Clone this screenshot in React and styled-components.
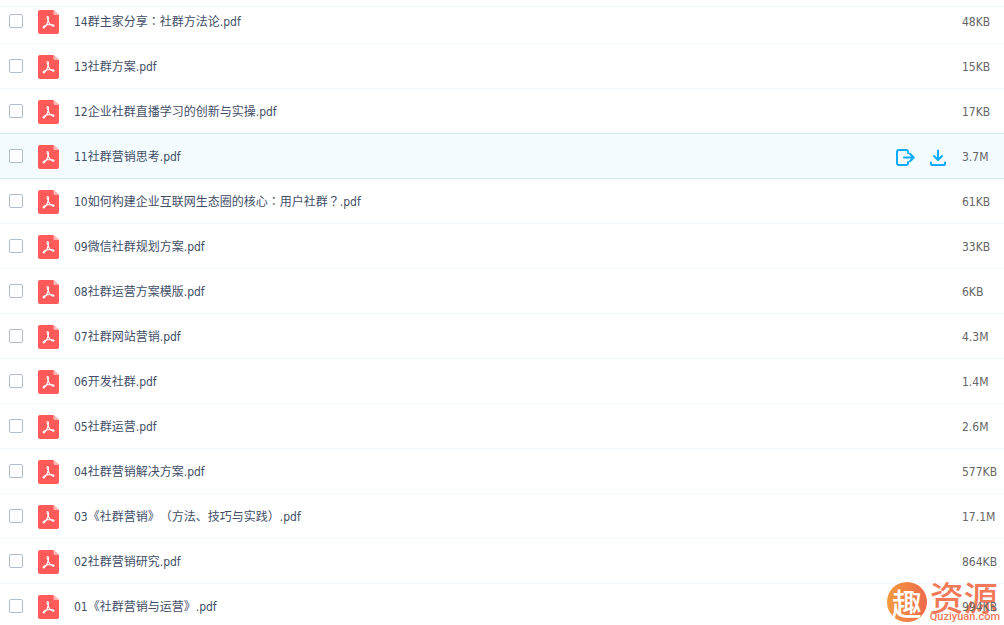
import React from "react";
import styled, { createGlobalStyle } from "styled-components";

const GlobalStyle = createGlobalStyle`
  * { box-sizing: border-box; }
  body {
    margin: 0;
    background: #fff;
    color: #424e67;
    font: 12px/18px "DejaVu Sans Condensed", "Noto Sans CJK SC", sans-serif;
    text-spacing-trim: space-all;
  }
`;

const Page = styled.main`
  position: relative;
  height: 100vh;
  overflow: hidden;
`;

const HeaderEdge = styled.div`
  position: relative;
  z-index: 1;
  height: 7px;
  background: #fff;
  border-bottom: 1px solid #f2f6fd;
`;

const FileList = styled.ul`
  list-style: none;
  margin: -8px 0 0;
  padding: 0;
`;

const Row = styled.li`
  display: flex;
  align-items: center;
  height: ${(p) => (p.$active ? 46 : 45)}px;
  margin-top: ${(p) => (p.$active ? -1 : 0)}px;
  padding: ${(p) => (p.$active ? 1 : 2)}px 0 0 9px;
  background: ${(p) => (p.$active ? "#f3fbff" : "transparent")};
  border-bottom: 1px solid ${(p) => (p.$active ? "#cfe9fb" : "#f2f6fd")};
  border-top: ${(p) => (p.$active ? "1px solid #cfe9fb" : "0")};
`;

const Check = styled.input`
  appearance: none;
  flex: none;
  width: 14px;
  height: 14px;
  margin: 0 15px 2px 0;
  border: 1px solid #aebdcd;
  border-radius: 2px;
  background: #fff;
`;

const FileLabel = styled.label`
  display: flex;
  align-items: center;
  gap: 15px;
  flex: 1;
  min-width: 0;
  white-space: nowrap;
`;

const Centered = styled.span`
  font-family: "Noto Sans CJK TC", sans-serif;
  line-height: 12px;
`;

const Actions = styled.div`
  display: flex;
  gap: 15px;
  margin-right: 16px;
  padding-top: 3px;
`;

const IconButton = styled.button`
  display: flex;
  padding: 0;
  border: 0;
  background: none;
  color: #09aaff;
`;

const Size = styled.span`
  position: relative;
  z-index: 1;
  flex: none;
  width: 42px;
  color: #666;
`;

const Watermark = styled.div`
  position: absolute;
  right: 4px;
  bottom: 3px;
  display: flex;
  align-items: center;
  gap: 3px;
  color: #f2795a;
`;

const Seal = styled.span`
  display: grid;
  place-items: center;
  width: 40px;
  height: 40px;
  border-radius: 50%;
  background: linear-gradient(90deg, #f49a3e, #ee6a4c);
  color: #fff;
  font: 500 30px/36px "Noto Sans CJK SC", sans-serif;
`;

const Brand = styled.span`
  display: flex;
  flex-direction: column;
  font: 500 34px/30px "Noto Sans CJK SC", sans-serif;
`;

const Domain = styled.small`
  font: 500 11px/10px Roboto, sans-serif;
`;

const PdfIcon = () => (
  <svg width="21" height="24" viewBox="0 0 21 24" aria-hidden="true">
    <path d="M2 0H15.500L21 5V22a2 2 0 0 1-2 2H2a2 2 0 0 1-2-2V2a2 2 0 0 1 2-2Z" fill="#ff5a5a" />
    <path d="M15.500 0L21 5H17a1.500 1.500 0 0 1-1.500-1.500Z" fill="#ffb5b5" />
    <path
      d="M9.300 6.500c1.500-.3 1.400 2.200 1 4-.7 2.700-2.500 5.800-3.900 7.100-.9.800-1.700.2-1.100-.7 1.100-1.500 4.700-2.500 7.800-2.400 1.900 0 3.300.8 2.800 1.500-.9.900-4-1.300-5-3.500-.8-1.800-2.600-5.600-1.600-6Z"
      fill="none" stroke="#fff" strokeWidth="1.100"
    />
  </svg>
);

const ShareIcon = () => (
  <svg width="19" height="18" viewBox="0 0 19 18" fill="none" stroke="currentColor" strokeWidth="2" strokeLinecap="round" strokeLinejoin="round" aria-hidden="true">
    <path d="M12 4V3a2 2 0 0 0-2-2H3a2 2 0 0 0-2 2v11a2 2 0 0 0 2 2h7a2 2 0 0 0 2-2v-1M8 8.500h9.500M14 4.800l3.700 3.700-3.700 3.700" />
  </svg>
);

const DownloadIcon = () => (
  <svg width="16" height="18" viewBox="0 0 16 18" fill="none" stroke="currentColor" strokeWidth="2" strokeLinecap="round" strokeLinejoin="round" aria-hidden="true">
    <path d="M8 1.500V10.500M4 7L8 11 12 7M1 13.500V15a1 1 0 0 0 1 1h12a1 1 0 0 0 1-1v-1.500" />
  </svg>
);

const files = [
  ["14群主家分享：社群方法论.pdf", "48KB"],
  ["13社群方案.pdf", "15KB"],
  ["12企业社群直播学习的创新与实操.pdf", "17KB"],
  ["11社群营销思考.pdf", "3.7M", true],
  ["10如何构建企业互联网生态圈的核心：用户社群？.pdf", "61KB"],
  ["09微信社群规划方案.pdf", "33KB"],
  ["08社群运营方案模版.pdf", "6KB"],
  ["07社群网站营销.pdf", "4.3M"],
  ["06开发社群.pdf", "1.4M"],
  ["05社群运营.pdf", "2.6M"],
  ["04社群营销解决方案.pdf", "577KB"],
  ["03《社群营销》（方法、技巧与实践）.pdf", "17.1M"],
  ["02社群营销研究.pdf", "864KB"],
  ["01《社群营销与运营》.pdf", "994KB"],
];

const FileName = ({ name }) => (
  <span>
    {name.split(/([：？（）])/).map((part, i) => (i % 2 ? <Centered key={i}>{part}</Centered> : part))}
  </span>
);

export default function App() {
  return (
    <Page>
      <GlobalStyle />
      <HeaderEdge />
      <FileList>
        {files.map(([name, size, active], i) => (
          <Row key={name} $active={active}>
            <Check type="checkbox" id={`file-${i}`} />
            <FileLabel htmlFor={`file-${i}`}>
              <PdfIcon />
              <FileName name={name} />
            </FileLabel>
            {active && (
              <Actions>
                <IconButton type="button" aria-label="分享"><ShareIcon /></IconButton>
                <IconButton type="button" aria-label="下载"><DownloadIcon /></IconButton>
              </Actions>
            )}
            <Size>{size}</Size>
          </Row>
        ))}
      </FileList>
      <Watermark>
        <Seal>趣</Seal>
        <Brand>资源<Domain>Quziyuan.com</Domain></Brand>
      </Watermark>
    </Page>
  );
}
